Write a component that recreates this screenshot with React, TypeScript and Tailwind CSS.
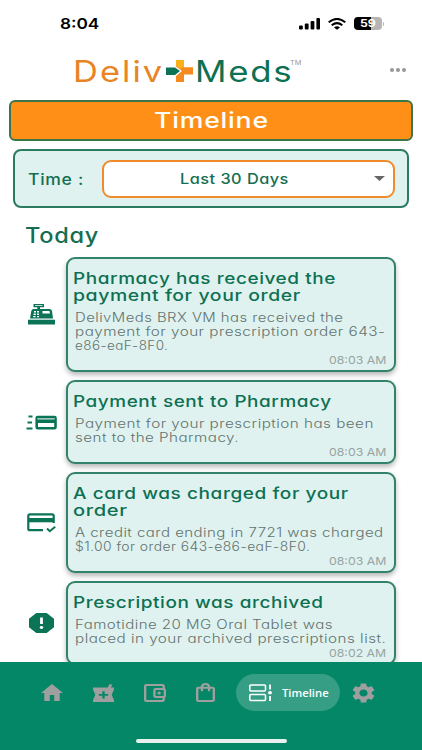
import { useLayoutEffect, useRef, useState, type ReactNode } from 'react';

const events = [
  {
    icon: 'register',
    title: [
      ['Pharmacy has received the', 263],
      ['payment for your order', 228],
    ],
    body: [
      ['DelivMeds BRX VM has received the', 268],
      ['payment for your prescription order 643-', 310],
      ['e86-eaF-8F0.', 93],
    ],
    time: '08:03 AM',
  },
  {
    icon: 'sent',
    title: [['Payment sent to Pharmacy', 259]],
    body: [
      ['Payment for your prescription has been', 299],
      ['sent to the Pharmacy.', 164],
    ],
    time: '08:03 AM',
  },
  {
    icon: 'charged',
    title: [
      ['A card was charged for your', 276],
      ['order', 54],
    ],
    body: [
      ['A credit card ending in 7721 was charged', 308],
      ['$1.00 for order 643-e86-eaF-8F0.', 235],
    ],
    time: '08:03 AM',
  },
  {
    icon: 'archived',
    title: [['Prescription was archived', 250]],
    body: [
      ['Famotidine 20 MG Oral Tablet was', 258],
      ['placed in your archived prescriptions list.', 311],
    ],
    time: '08:02 AM',
  },
] as { icon: string; title: [string, number][]; body: [string, number][]; time: string }[];

// Wide lettering: stretches one line of text to the given width
function Wide({ width, children, className = '' }: { width: number; children: ReactNode; className?: string }) {
  const ref = useRef<HTMLSpanElement>(null);
  const [scale, setScale] = useState(1);

  useLayoutEffect(() => {
    if (ref.current) setScale(width / ref.current.offsetWidth);
  }, [width]);

  return (
    <span className={`block whitespace-nowrap ${className}`} style={{ width }}>
      <span ref={ref} className="inline-block origin-left" style={{ transform: `scaleX(${scale})` }}>
        {children}
      </span>
    </span>
  );
}

function Icon({ box, className, children }: { box: string; className: string; children: ReactNode }) {
  return (
    <svg viewBox={box} preserveAspectRatio="none" fill="currentColor" className={`shrink-0 ${className}`}>
      {children}
    </svg>
  );
}

function EventIcon({ name }: { name: string }) {
  switch (name) {
    case 'register':
      return (
        <Icon box="0 0 27 21" className="w-[27px] h-[21px]">
          <path d="M5.500 0h10.500v3.300h-4V5h9.500q2 0 2.500 2l1 7.500H2L3.300 7q.5-2 2.300-2H9.300V3.300H5.500z" />
          <path d="M0 15.700h27V20.500H0z" />
          <path d="M7 1.200h7.500v.9H7zM6 7h2v1.500H6zM9 7h2v1.500H9zM5.600 9.500h2.200V11H5.600zM9 9.500h2V11H9zM5.200 12h2.400v1.300H5.200zM9 12h2v1.300H9zM14.500 7h7l.5 2.500h-7.500z" fill="#fff" />
        </Icon>
      );
    case 'sent':
      return (
        <Icon box="0 0 31 15" className="w-[31px] h-[15px]">
          <path d="M2.500 1.500h4M1.500 7.500h4.500M.5 13.500h6" stroke="currentColor" strokeWidth="1.800" />
          <rect x="10.700" y="2" width="18.800" height="11.300" rx="1" fill="#fff" stroke="currentColor" strokeWidth="2.600" />
          <path d="M11 3.200h18v1.200H11z" fill="#8fc0b0" />
          <path d="M10 4.500h20v3.500H10z" />
        </Icon>
      );
    case 'charged':
      return (
        <Icon box="0 0 29 20" className="w-[29px] h-[20px]">
          <path d="M16 17.200H3q-1.700 0-1.700-1.500V2.800Q1.300 1.300 3 1.300h22q1.700 0 1.700 1.500V10" fill="none" stroke="currentColor" strokeWidth="2.200" />
          <path d="M1 5h26v4.300H1z" />
          <path d="M20 15.500l2.800 2.700 5.400-4.500" fill="none" stroke="currentColor" strokeWidth="2" />
        </Icon>
      );
    default:
      return (
        <Icon box="3 3 18 18" className="w-[25px] h-[20px]">
          <path d="M15.730 3H8.270L3 8.270v7.460L8.270 21h7.460L21 15.730V8.270L15.730 3zM12 17.300c-.72 0-1.300-.58-1.300-1.300 0-.72.58-1.300 1.300-1.300.72 0 1.300.58 1.300 1.300 0 .72-.58 1.300-1.300 1.300zm1-4.300h-2V7h2v6z" />
        </Icon>
      );
  }
}

function StatusBar() {
  return (
    <div className="flex h-[47px] shrink-0 items-center pl-[60px] pr-[38px] text-black">
      <Wide width={39} className="text-[15px] font-semibold leading-5">8:04</Wide>
      <div className="ml-auto flex items-center gap-[8px]">
        <svg viewBox="0 0 21 12" fill="currentColor" className="h-[12px] w-[21px]">
          <rect x="0" y="7.500" width="3.800" height="4" rx="1" />
          <rect x="5.800" y="5.500" width="3.800" height="6" rx="1" />
          <rect x="11.600" y="3" width="3.800" height="8.500" rx="1" />
          <rect x="17.400" y="0" width="3.600" height="11.500" rx="1" />
        </svg>
        <svg viewBox="0 0 18 12" fill="none" stroke="currentColor" strokeWidth="2" className="h-[12px] w-[18px]">
          <path d="M.7 4.300Q9-2.500 17.300 4.300M3.700 7.300Q9 3 14.300 7.300" />
          <path d="M6 9.400Q9 7.200 12 9.400L9 11.800z" fill="currentColor" stroke="none" />
        </svg>
        <div className="flex items-center gap-px">
          <div className="flex h-[13px] w-[28px] items-center justify-center rounded-[4px] bg-linear-to-r from-black from-60% to-[#b5b5b5] to-60% text-[10px] font-bold text-white">
            <Wide width={16} className="leading-[13px]">59</Wide>
          </div>
          <div className="h-[4px] w-[1.500px] rounded-r bg-[#b5b5b5]" />
        </div>
      </div>
    </div>
  );
}

function Header() {
  return (
    <header className="flex h-[53px] shrink-0 items-start pl-[73px] pr-[16px] pt-[6px] leading-[36px]">
      <Wide width={91} className="text-[29.500px] tracking-[0.06em] text-[#e98425]">Deliv</Wide>
      <svg viewBox="0 0 27 22" className="ml-[2px] mt-[7px] h-[22px] w-[27px]">
        <path d="M10 0h8v7.300h9v7.300h-9V22h-8v-6l6-5-6-4.500z" fill="#f58a1f" />
        <path d="M10 0h8v7.300l-4 1.500-4-2.500z" fill="#fbb01c" />
        <path d="M0 7.500h9l5 3.500-5 4H0z" fill="#0b7355" />
      </svg>
      <Wide width={98} className="ml-[2px] text-[29.500px] tracking-[0.05em] text-[#0d7052]">Meds</Wide>
      <Wide width={11} className="-ml-[3px] mt-[6px] text-[6px] leading-[8px] text-[#999]">TM</Wide>
      <div className="ml-auto mt-[15px] flex gap-[2px]">
        <i className="h-[4px] w-[4px] rounded-full bg-[#979797]" />
        <i className="h-[4px] w-[4px] rounded-full bg-[#979797]" />
        <i className="h-[4px] w-[4px] rounded-full bg-[#979797]" />
      </div>
    </header>
  );
}

function BottomNav() {
  return (
    <nav className="flex h-[88px] shrink-0 flex-col items-center bg-[#038767] text-[#9f9f9f]">
      <div className="flex w-full items-center pl-[41px] pt-[12px]">
        <Icon box="2 3 20 17" className="h-[17px] w-[22px]">
          <path d="M10 20v-6h4v6h5v-8h3L12 3 2 12h3v8z" />
        </Icon>
        <Icon box="3 1 18 20" className="ml-[30px] h-[18px] w-[21px]">
          <path d="M21 5h-2.640l1.140-3.140L17.150 1l-1.460 4H3v2l2 6-2 6v2h18v-2l-2-6 2-6V5zm-5 9h-3v3h-2v-3H8v-2h3V9h2v3h3v2z" />
        </Icon>
        <Icon box="3 3 19 18" className="ml-[30px] h-[18px] w-[22px]">
          <path d="M21 7.280V5c0-1.100-.9-2-2-2H5a2 2 0 0 0-2 2v14a2 2 0 0 0 2 2h14c1.100 0 2-.9 2-2v-2.280A2 2 0 0 0 22 15V9a2 2 0 0 0-1-1.720zM20 9v6h-7V9h7zM5 19V5h14v2h-6a2 2 0 0 0-2 2v6c0 1.100.9 2 2 2h6v2H5z" />
          <circle cx="16" cy="12" r="1.500" />
        </Icon>
        <Icon box="4 2 16 20" className="ml-[30px] h-[19px] w-[19px]">
          <path d="M18 6h-2c0-2.210-1.790-4-4-4S8 3.790 8 6H6c-1.100 0-2 .9-2 2v12c0 1.100.9 2 2 2h12c1.100 0 2-.9 2-2V8c0-1.100-.9-2-2-2zm-6-2c1.100 0 2 .9 2 2h-4c0-1.100.9-2 2-2zm6 16H6V8h2v2c0 .55.45 1 1 1s1-.45 1-1V8h4v2c0 .55.45 1 1 1s1-.45 1-1V8h2v12z" />
        </Icon>
        <div className="ml-[21px] flex h-[37px] w-[104px] items-center rounded-full bg-[#359e85] pl-[13px] text-white">
          <Icon box="0 0 23 18" className="h-[18px] w-[23px]">
            <rect x=".8" y="1" width="15.700" height="6" rx="1" fill="none" stroke="currentColor" strokeWidth="1.600" />
            <rect x=".8" y="10.500" width="15.700" height="6" rx="1" fill="none" stroke="currentColor" strokeWidth="1.600" />
            <path d="M21 .5v5M21 12v5" fill="none" stroke="currentColor" strokeWidth="1.800" />
            <ellipse cx="21" cy="8.700" rx="2" ry="1.700" />
          </Icon>
          <Wide width={47} className="ml-[10px] font-['Open_Sans'] text-[11.500px] font-semibold leading-4">Timeline</Wide>
        </div>
        <Icon box="2 2 20 20" className="ml-[12px] h-[20px] w-[23px]">
          <path d="M19.140 12.940c.04-.3.06-.61.06-.94 0-.32-.02-.64-.07-.94l2.030-1.580a.49.49 0 0 0 .12-.61l-1.920-3.320a.488.488 0 0 0-.59-.22l-2.390.96c-.5-.38-1.030-.7-1.620-.94l-.36-2.540a.484.484 0 0 0-.48-.41h-3.840c-.24 0-.43.17-.47.41l-.36 2.540c-.59.24-1.130.57-1.620.94l-2.390-.96c-.22-.08-.47 0-.59.22L2.740 8.870c-.12.21-.08.47.12.61l2.030 1.580c-.05.3-.09.63-.09.94s.02.64.07.94l-2.030 1.580a.49.49 0 0 0-.12.61l1.920 3.320c.12.22.37.29.59.22l2.390-.96c.5.38 1.030.7 1.620.94l.36 2.540c.05.24.24.41.48.41h3.840c.24 0 .44-.17.47-.41l.36-2.540c.59-.24 1.130-.56 1.620-.94l2.390.96c.22.08.47 0 .59-.22l1.920-3.320c.12-.22.07-.47-.12-.61l-2.010-1.580zM12 15.600c-1.980 0-3.600-1.620-3.600-3.600s1.620-3.600 3.600-3.600 3.600 1.620 3.600 3.600-1.620 3.600-3.600 3.600z" />
        </Icon>
      </div>
      <div className="ml-[1px] mt-[28px] h-[4px] w-[151px] rounded-full bg-[#e9f1ee]" />
    </nav>
  );
}

export default function App() {
  return (
    <div className="flex h-[750px] w-[422px] flex-col overflow-hidden bg-white font-[Inter,sans-serif] text-[#156e51] [font-feature-settings:'cv11']">
      <StatusBar />
      <Header />

      <h1 className="mx-[9px] flex h-[41px] shrink-0 justify-center rounded-[6px] border-2 border-[#3b7548] bg-[#ff8f17] text-[22px] font-medium leading-[37px] tracking-[0.03em] text-white">
        <Wide width={115}>Timeline</Wide>
      </h1>

      <div className="mx-[13px] mt-2 flex h-[59px] shrink-0 items-center rounded-[8px] border-2 border-[#2b7b60] bg-[#dff2ef] pl-[13px] pr-[12px]">
        <Wide width={56} className="text-[16px] font-medium leading-5 tracking-[0.04em]">Time :</Wide>
        <div className="ml-auto flex h-[38px] w-[293px] items-center rounded-[9px] border-2 border-[#f08a2b] bg-white pl-[76px] pr-[8px]">
          <Wide width={109} className="text-[14.500px] font-medium leading-5 tracking-[0.03em]">Last 30 Days</Wide>
          <svg viewBox="0 0 11 5" className="ml-auto h-[5px] w-[11px] fill-[#666]">
            <path d="M0 0h11L5.500 5z" />
          </svg>
        </div>
      </div>

      <h2 className="ml-[25px] mt-[13px] h-[36px] shrink-0 text-[21px] font-medium leading-[30px] tracking-[0.03em]">
        <Wide width={74}>Today</Wide>
      </h2>

      <main className="flex min-h-0 flex-1 flex-col gap-[8px] overflow-hidden pr-[26px]">
        {events.map((event) => (
          <div key={event.title[0][0]} className="flex shrink-0">
            <div className="flex w-[66px] shrink-0 items-center justify-center pl-4 text-[#0b7356]">
              <EventIcon name={event.icon} />
            </div>
            <article className="flex-1 rounded-[9px] border-2 border-[#33826a] bg-[#dff2f0] pb-[3px] pl-[5px] pr-[8px] pt-[11px] shadow-[0_3px_5px_rgba(0,0,0,0.28)]">
              <h3 className="text-[16px] font-medium leading-[17px] tracking-[0.03em] text-[#0d7052]">
                {event.title.map(([text, width]) => (
                  <Wide key={text} width={width}>{text}</Wide>
                ))}
              </h3>
              <p className="mt-[7px] pl-[2px] text-[12.500px] font-light leading-[14px] tracking-[0.03em] text-[#63726f]">
                {event.body.map(([text, width]) => (
                  <Wide key={text} width={width}>{text}</Wide>
                ))}
              </p>
              <div className="flex justify-end text-[11px] leading-[14px] text-[#98a4a2]">
                <Wide width={57}>{event.time}</Wide>
              </div>
            </article>
          </div>
        ))}
      </main>

      <BottomNav />
    </div>
  );
}
